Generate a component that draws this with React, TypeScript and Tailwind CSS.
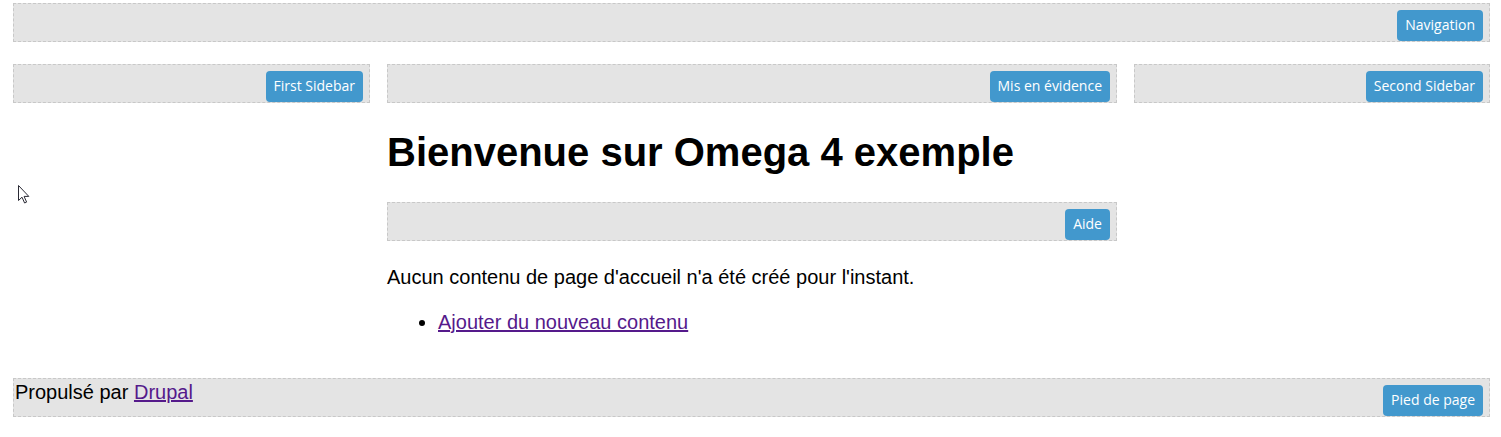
import type { ReactNode } from 'react';

function RegionLabel({ children }: { children: ReactNode }) {
  return (
    <span className="inline-flex h-[31px] items-center rounded-[4px] bg-[#4298cd] px-[8px] pb-[2px] font-['Open_Sans',sans-serif] text-[14px] text-white">
      {children}
    </span>
  );
}

function Region({ label, children }: { label: string; children?: ReactNode }) {
  return (
    <div className="flex h-[39px] items-end justify-between border border-dashed border-[#c8c8c8] bg-[#e4e4e4] pr-[6px]">
      <div className="self-start">{children}</div>
      <RegionLabel>{label}</RegionLabel>
    </div>
  );
}

function Cursor() {
  return (
    <svg
      className="absolute left-[18px] top-[185px]"
      width="12"
      height="19"
      viewBox="0 0 12 19"
      fill="none"
    >
      <path
        d="M0.5 0.5 L0.5 15.5 L4 12.2 L6.6 18 L8.6 17.1 L6.1 11.4 L10.8 11.4 Z"
        fill="#ffffff"
        stroke="#2a2a35"
        strokeWidth="1"
        strokeLinejoin="miter"
      />
    </svg>
  );
}

export default function App() {
  return (
    <div className="relative min-h-[437px] bg-white pt-[3px] font-['Liberation_Sans',Arial,sans-serif] text-black">
      <Cursor />
      <div className="ml-[13px] w-[1477px]">
        <Region label="Navigation" />

        <div className="mt-[22px] grid grid-cols-[357px_730px_356px] gap-[17px]">
          <div>
            <Region label="First Sidebar" />
          </div>

          <main>
            <Region label="Mis en évidence" />
            <h1 className="mt-[26px] text-[40px] font-bold leading-[46px]">Bienvenue sur Omega 4 exemple</h1>
            <div className="mt-[27px]">
              <Region label="Aide" />
            </div>
            <p className="mt-[25px] text-[20px] leading-[23px]">
              Aucun contenu de page d'accueil n'a été créé pour l'instant.
            </p>
            <ul className="mt-[22px] list-disc pl-[51px] text-[20px] leading-[23px]">
              <li>
                <a href="#" className="text-[#551a8b] underline">
                  Ajouter du nouveau contenu
                </a>
              </li>
            </ul>
          </main>

          <div>
            <Region label="Second Sidebar" />
          </div>
        </div>

        <footer className="mt-[44px]">
          <Region label="Pied de page">
            <p className="pl-[1px] pt-[2px] text-[20px] leading-[23px]">
              Propulsé par{' '}
              <a href="#" className="text-[#551a8b] underline">
                Drupal
              </a>
            </p>
          </Region>
        </footer>
      </div>
    </div>
  );
}
